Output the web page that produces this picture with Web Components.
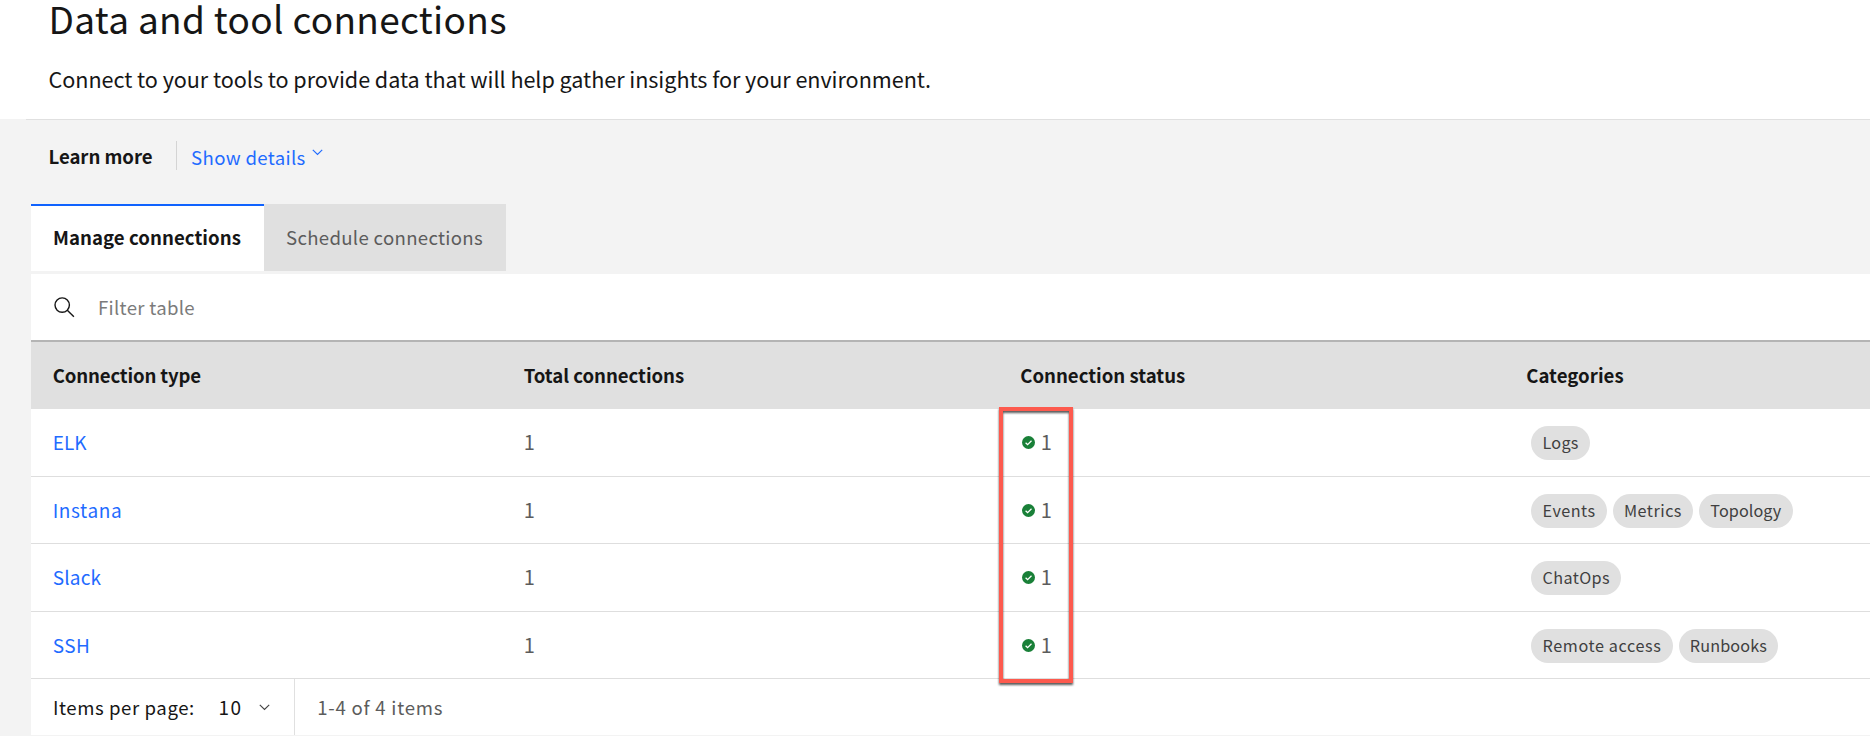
<!DOCTYPE html>
<html lang="en">
<head>
<meta charset="utf-8">
<title>Data and tool connections</title>
<style>
html,body{margin:0;padding:0}
body{width:1870px;height:736px;overflow:hidden;background:#f3f3f3;color:#161616;font-family:"Noto Sans CJK SC","Noto Sans",sans-serif;font-size:18.6px;line-height:28px}
</style>
</head>
<body>
<connections-page></connections-page>
<script>
const define = (name, html, setup) => customElements.define(name, class extends HTMLElement {
  connectedCallback() {
    if (this.shadowRoot) return;
    const t = document.createElement('template');
    t.innerHTML = html;
    this.attachShadow({mode: 'open'}).append(t.content.cloneNode(true));
    if (setup) setup(this, this.shadowRoot);
  }
});

// A label whose tracking adapts so the text fills the width in its "w" attribute.
define('tracked-text', `<style>
:host{display:block;white-space:pre;flex:none}
span{display:inline-block;vertical-align:top}
</style><span><slot></slot></span>`, (host, root) => {
  const w = parseFloat(host.getAttribute('w'));
  if (!w) return;
  const span = root.querySelector('span');
  host.style.width = w + 'px';
  const n = host.textContent.length;
  span.style.letterSpacing = ((w - span.getBoundingClientRect().width) / n).toFixed(3) + 'px';
});

define('chevron-icon', `<style>:host{display:block;flex:none;width:11px;height:7px}svg{display:block}</style>
<svg width="11" height="7" viewBox="0 0 11 7"><path d="M.8.8 5.5 5.5 10.2.8" fill="none" stroke="currentColor" stroke-width="1.15"/></svg>`);

define('search-icon', `<style>:host{display:block;flex:none;width:21px;height:21px}svg{display:block}</style>
<svg width="21" height="21" viewBox="0 0 21 21" fill="none" stroke="#161616" stroke-width="1.4"><circle cx="8.2" cy="8.1" r="7.2"/><path d="M13.3 13.2l6.6 6.6"/></svg>`);

define('check-icon', `<style>:host{display:block;flex:none;width:13px;height:13px}svg{display:block}</style>
<svg width="13" height="13" viewBox="0 0 13 13"><circle cx="6.5" cy="6.5" r="6.5" fill="#198038"/><path d="M3.6 6.7l2 2 3.9-3.9" fill="none" stroke="#fff" stroke-width="1.25"/></svg>`);

define('page-header', `<style>
:host{display:flow-root;box-sizing:border-box;height:119px;background:#fff;padding-left:48.5px}
.title{font-size:37px;line-height:37px;height:56px}
.sub{font-size:21.6px;line-height:30px;padding-top:8px}
</style>
<tracked-text class="title" w="458.3">Data and tool connections</tracked-text>
<tracked-text class="sub" w="882.5">Connect to your tools to provide data that will help gather insights for your environment.</tracked-text>`);

define('learn-more', `<style>
:host{display:flex;box-sizing:border-box;height:85px;margin-left:26px;border-top:1px solid #e0e0e0;padding:21px 0 0 22.5px;align-items:flex-start}
.b{font-weight:700;padding-top:1px}
.line{width:1px;height:29px;background:#d4d4d4;margin:0 14.6px 0 23px}
.link{color:#1f6bff;padding-top:2px}
chevron-icon{color:#1f6bff;margin:8px 0 0 6.2px}
</style>
<tracked-text class="b" w="104">Learn more</tracked-text><div class="line"></div>
<tracked-text class="link" w="114.5">Show details</tracked-text><chevron-icon></chevron-icon>`);

define('nav-tab', `<style>
:host{display:block;box-sizing:border-box;height:67px;background:#e0e0e0;color:#5c5c5c;padding:19px 0 0 22px}
:host([selected]){background:#fff;border-top:2px solid #0f62fe;color:#161616;font-weight:700;padding-top:17px}
</style><slot></slot>`);

define('tab-bar', `<style>
:host{display:flex;height:70px;margin-left:31px}
.one{width:233px}.two{width:242px}
</style>
<nav-tab class="one" selected><tracked-text w="188">Manage connections</tracked-text></nav-tab>
<nav-tab class="two"><tracked-text w="197">Schedule connections</tracked-text></nav-tab>`);

define('filter-bar', `<style>
:host{display:flex;box-sizing:border-box;height:68px;background:#fff;border-bottom:2px solid #b4b4b4;padding:23px 0 0 23px}
tracked-text{color:#7b7b7b;margin:-4px 0 0 23px}
</style><search-icon></search-icon><tracked-text w="97">Filter table</tracked-text>`);

define('table-row', `<style>
:host{display:grid;grid-template-columns:471px 496.5px 506px 1fr;box-sizing:border-box;height:67.5px;padding:19px 0 0 21.7px;color:#5c5c5c;border-bottom:1px solid #dedede;font-size:19px}
:host([head]){height:67px;background:#e0e0e0;color:#161616;font-weight:700;border:0;padding-top:18.5px;font-size:18.6px}
</style><slot></slot>`);

define('status-count', `<style>
:host{display:flex;gap:6px;padding-left:1.5px}
check-icon{margin-top:8px}
.n{font-size:20px}
</style><check-icon></check-icon><slot></slot>`);

define('tag-list', `<style>:host{display:flex;gap:6px;padding-left:5.2px;margin-top:-2px}</style><slot></slot>`);

define('tag-pill', `<style>
:host{display:block;height:34px;border-radius:17px;background:#e0e0e0;color:#404040;padding:0 11.2px;font-size:16.2px;line-height:33px}
</style><slot></slot>`);

define('table-pager', `<style>
:host{display:flex;box-sizing:border-box;height:56px;background:#fff;padding-left:22px;color:#161616}
.t{padding-top:14px}
.ten{margin-left:23.7px;font-size:19px}
chevron-icon{color:#444;margin:25px 0 0 16.3px}
.line{width:1px;background:#e0e0e0;margin:0 22px 0 24.4px;align-self:stretch}
.range{color:#5c5c5c}
</style>
<tracked-text class="t" w="141.8">Items per page:</tracked-text><tracked-text class="t ten" w="24">10</tracked-text><chevron-icon></chevron-icon>
<div class="line"></div><tracked-text class="t range" w="126">1-4 of 4 items</tracked-text>`);

define('focus-frame', `<style>
:host{display:block;position:absolute;box-sizing:border-box;left:967.7px;top:133px;width:74.8px;height:276px;border:4.6px solid #fd5a4e;filter:drop-shadow(0 2px 1px rgba(0,0,0,.65))}
</style>`);

const rows = [
  ['ELK', 34, [['Logs', 36]]],
  ['Instana', 69.5, [['Events', 53], ['Metrics', 58], ['Topology', 71]]],
  ['Slack', 48.5, [['ChatOps', 67.3]]],
  ['SSH', 37.5, [['Remote access', 118.8], ['Runbooks', 77.3]]]
];
define('connections-table', `<style>
:host{display:block;position:relative;margin-left:31px;background:#fff}
.link{color:#1f6bff}
.n{font-size:20px}
</style>
<filter-bar></filter-bar>
<table-row head><tracked-text w="148.3">Connection type</tracked-text><tracked-text w="160.5">Total connections</tracked-text><tracked-text w="165">Connection status</tracked-text><tracked-text w="97.5">Categories</tracked-text></table-row>
${rows.map(([n, w, tags]) => `<table-row><tracked-text class="link" w="${w}">${n}</tracked-text><tracked-text class="n">1</tracked-text><status-count><tracked-text class="n">1</tracked-text></status-count><tag-list>${tags.map(([t, tw]) => `<tag-pill><tracked-text w="${tw}">${t}</tracked-text></tag-pill>`).join('')}</tag-list></table-row>`).join('')}
<table-pager></table-pager>
<focus-frame></focus-frame>`);

define('connections-page', `<style>:host{display:block;height:736px;overflow:hidden}</style>
<page-header></page-header><learn-more></learn-more><tab-bar></tab-bar><connections-table></connections-table>`);
</script>
</body>
</html>
